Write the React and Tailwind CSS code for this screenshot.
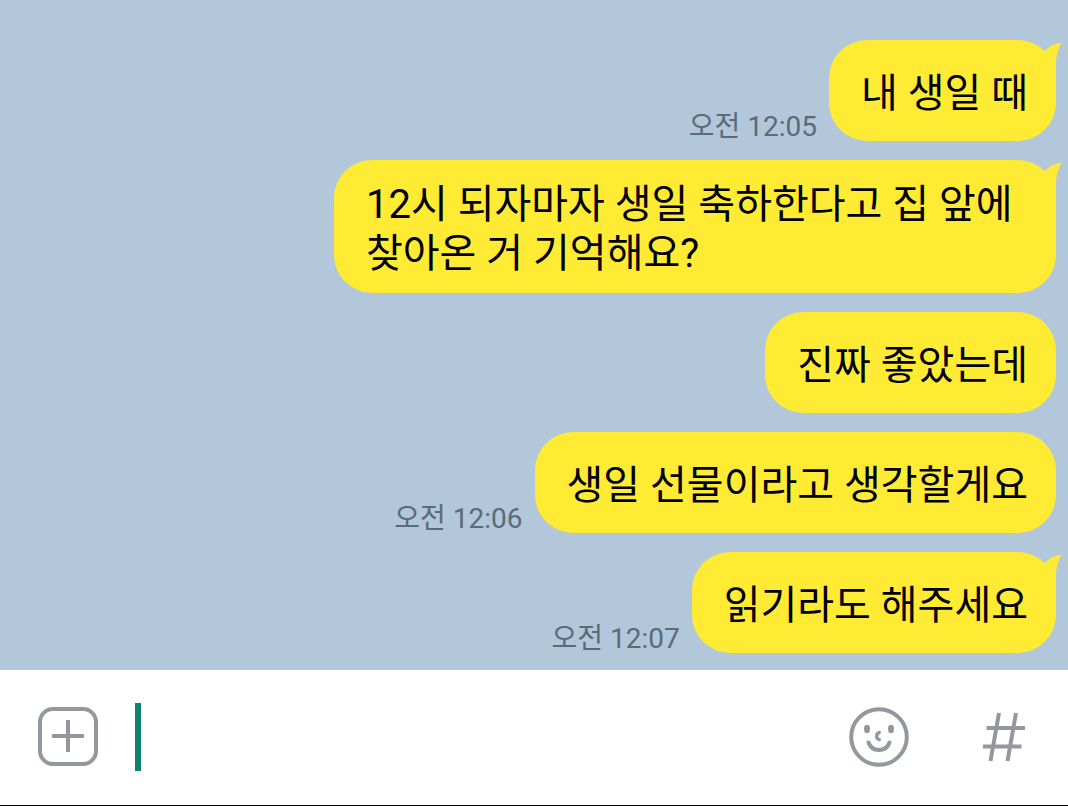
import { useState } from 'react';

const messages = [
    { id: 1, text: '내 생일 때', time: '오전 12:05', tail: true },
    { id: 2, text: '12시 되자마자 생일 축하한다고 집 앞에 찾아온 거 기억해요?', tail: true },
    { id: 3, text: '진짜 좋았는데' },
    { id: 4, text: '생일 선물이라고 생각할게요', time: '오전 12:06' },
    { id: 5, text: '읽기라도 해주세요', time: '오전 12:07', tail: true },
];

function BubbleTail() {
    return (
        <svg
            className="absolute top-0 -right-1.5 text-[#ffeb33]"
            width="24"
            height="40"
            viewBox="0 0 24 40"
            fill="currentColor"
            aria-hidden="true"
        >
            <path d="M4 16 L7 10.5 Q13.5 4 23.8 2.6 Q18 11 18 24 L18 40 L4 40 Z" />
        </svg>
    );
}

function Message({ text, time, tail }) {
    return (
        <li className="flex items-end justify-end gap-3">
            {time && (
                <time className="shrink-0 text-[28px] leading-[28px] text-[#5b6b78]">{time}</time>
            )}
            <div className="relative flex min-h-[101px] max-w-[722px] items-center rounded-[38px] bg-[#ffeb33] pt-5 pr-7 pb-[15px] pl-8 text-[40px] leading-[49px] text-black">
                <p className="break-keep">{text}</p>
                {tail && <BubbleTail />}
            </div>
        </li>
    );
}

function PlusIcon() {
    return (
        <svg width="60" height="60" viewBox="0 0 60 60" fill="none" stroke="currentColor" strokeWidth="4" aria-hidden="true">
            <rect x="2" y="2" width="56" height="55" rx="13" />
            <path d="M30 13v32M14 29h32" />
        </svg>
    );
}

function SmileIcon() {
    return (
        <svg width="60" height="60" viewBox="0 0 60 60" fill="none" stroke="currentColor" strokeWidth="4" strokeLinecap="round" aria-hidden="true">
            <circle cx="30" cy="30" r="27.8" />
            <ellipse cx="18" cy="22" rx="3" ry="4.2" fill="currentColor" stroke="none" />
            <ellipse cx="42" cy="22" rx="3" ry="4.2" fill="currentColor" stroke="none" />
            <path d="M30.3 25.6Q27.6 26.6 27.6 29.2T30.3 32.6" strokeWidth="3.4" />
            <path d="M19.5 35.5C23 45.5 37 45.5 40.5 35.5" />
        </svg>
    );
}

function HashIcon() {
    return (
        <svg width="44" height="50" viewBox="0 0 44 50" fill="none" stroke="currentColor" strokeWidth="4" aria-hidden="true">
            <path d="M17 1L8.5 49M34 1L25.5 49M4.5 16H43M1 34.5H39.5" />
        </svg>
    );
}

export default function App() {
    const [draft, setDraft] = useState('');

    return (
        <div className="flex min-h-screen flex-col bg-[#b2c7da] font-[Roboto,'Noto_Sans_CJK_KR',sans-serif]">
            <main className="flex-1 pt-10 pr-3 pb-[17px] pl-3">
                <ol className="flex flex-col gap-[19px]">
                    {messages.map((message) => (
                        <Message key={message.id} {...message} />
                    ))}
                </ol>
            </main>

            <form
                className="flex h-[136px] items-center border-b border-black bg-white pr-[42px] pb-0.5 pl-[38px] text-[#93979e]"
                onSubmit={(e) => e.preventDefault()}
            >
                <button type="button" aria-label="첨부">
                    <PlusIcon />
                </button>
                <label className="ml-[37px] flex min-w-0 flex-1 items-center">
                    {/* Caret */}
                    {!draft && <span className="h-[68px] w-1.5 shrink-0 bg-[#0f8272]" />}
                    <input
                        type="text"
                        aria-label="메시지 입력"
                        className="h-[68px] w-full min-w-0 bg-transparent text-[40px] text-black outline-none"
                        value={draft}
                        onChange={(e) => setDraft(e.target.value)}
                    />
                </label>
                <button type="button" aria-label="이모티콘" className="mr-[73px]">
                    <SmileIcon />
                </button>
                <button type="button" aria-label="샵검색">
                    <HashIcon />
                </button>
            </form>
        </div>
    );
}
